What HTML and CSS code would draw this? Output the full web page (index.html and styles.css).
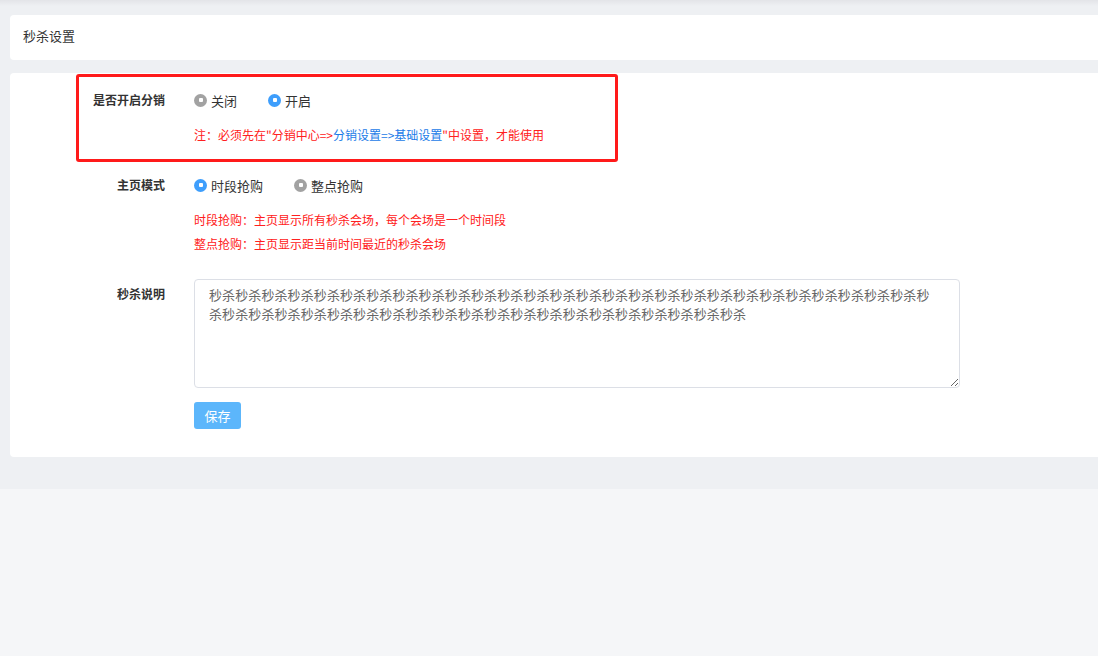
FILE: index.html
```html
<!DOCTYPE html>
<html>
<head>
    <meta charset="UTF-8">
    <title>秒杀设置</title>
    <link rel="stylesheet" href="styles.css">
</head>
<body>
    <div class="page">
        <div class="card header">秒杀设置</div>

        <div class="card main">
            <div class="mark"></div>

            <div class="row">
                <div class="label">是否开启分销</div>
                <div class="field">
                    <div class="radios">
                        <span class="radio"><i class="dot"></i>关闭</span>
                        <span class="radio"><i class="dot on"></i>开启</span>
                    </div>
                    <p class="note first">注：必须先在"分销中心=&gt;<span class="blue">分销设置=&gt;基础设置</span>"中设置，才能使用</p>
                </div>
            </div>

            <div class="row mode">
                <div class="label">主页模式</div>
                <div class="field">
                    <div class="radios">
                        <span class="radio"><i class="dot on"></i>时段抢购</span>
                        <span class="radio"><i class="dot"></i>整点抢购</span>
                    </div>
                    <div class="notes">
                        <p class="note">时段抢购：主页显示所有秒杀会场，每个会场是一个时间段</p>
                        <p class="note">整点抢购：主页显示距当前时间最近的秒杀会场</p>
                    </div>
                </div>
            </div>

            <div class="row desc">
                <div class="label">秒杀说明</div>
                <div class="field">
                    <textarea class="text">秒杀秒杀秒杀秒杀秒杀秒杀秒杀秒杀秒杀秒杀秒杀秒杀秒杀秒杀秒杀秒杀秒杀秒杀秒杀秒杀秒杀秒杀秒杀秒杀秒杀秒杀秒杀秒杀秒杀秒杀秒杀秒杀秒杀秒杀秒杀秒杀秒杀秒杀秒杀秒杀秒杀秒杀秒杀秒杀秒杀秒杀秒杀秒杀</textarea>
                    <button class="save">保存</button>
                </div>
            </div>
        </div>
    </div>
</body>
</html>
```

FILE: styles.css
```css
:root {
    --page: #eef0f3;
    --below: #f5f6f8;
    --text: #333333;
    --red: #ff2020;
    --blue: #1a7be8;
    --radio: #a2a2a2;
    --radio-on: #3e9efc;
}

* {
    margin: 0;
    padding: 0;
    box-sizing: border-box;
}

body {
    background: var(--below);
    color: var(--text);
    font-family: "Noto Sans CJK SC", "Noto Sans", sans-serif;
    font-size: 12px;
    overflow: hidden;
}

.page {
    background: linear-gradient(#e3e4e8, var(--page) 6px);
    padding: 15px 0 32px 10px;
}

.card {
    background: #ffffff;
    border-radius: 4px 0 0 4px;
}

.header {
    height: 45px;
    line-height: 42px;
    padding-left: 13px;
    font-size: 13px;
    margin-bottom: 13px;
}

.main {
    position: relative;
    padding: 17px 0 28px;
}

.mark {
    position: absolute;
    left: 66px;
    top: 1px;
    width: 542px;
    height: 88px;
    border: 3px solid #ff1a1a;
    border-radius: 3px;
}

.row {
    display: flex;
}

.label {
    width: 155px;
    margin-right: 29px;
    text-align: right;
    font-weight: bold;
    line-height: 20px;
}

.field {
    display: flex;
    flex-direction: column;
    align-items: flex-start;
}

.radios {
    display: flex;
    height: 20px;
    align-items: center;
    font-size: 13px;
}

.radio {
    display: flex;
    align-items: center;
    margin-right: 31px;
}

.dot {
    position: relative;
    width: 13px;
    height: 13px;
    border-radius: 50%;
    background: var(--radio);
    margin-right: 4px;
}

.dot::after {
    content: "";
    position: absolute;
    left: 4.5px;
    top: 4.5px;
    width: 4px;
    height: 4px;
    border-radius: 1px;
    background: #ffffff;
}

.dot.on {
    background: var(--radio-on);
}

.note {
    color: var(--red);
    line-height: 24px;
}

.note.first {
    line-height: 20px;
    margin-top: 15px;
}

.blue {
    color: var(--blue);
}

.mode {
    margin-top: 30px;
}

.notes {
    margin-top: 13px;
}

.desc {
    margin-top: 23px;
}

.desc .label {
    margin-top: 5px;
}

.text {
    width: 766px;
    height: 109px;
    padding: 5px 24px 5px 14px;
    border: 1px solid #dcdfe6;
    border-radius: 4px;
    font-family: "Noto Sans CJK SC", sans-serif;
    font-size: 13px;
    letter-spacing: 0.1px;
    line-height: 19px;
    color: #666666;
    outline: none;
}

.save {
    margin-top: 14px;
    height: 27px;
    min-width: 47px;
    padding: 0 10px;
    border: none;
    border-radius: 3px;
    background: #5cb6fb;
    color: #ffffff;
    font-family: "Noto Sans CJK SC", sans-serif;
    font-size: 13px;
}
```
